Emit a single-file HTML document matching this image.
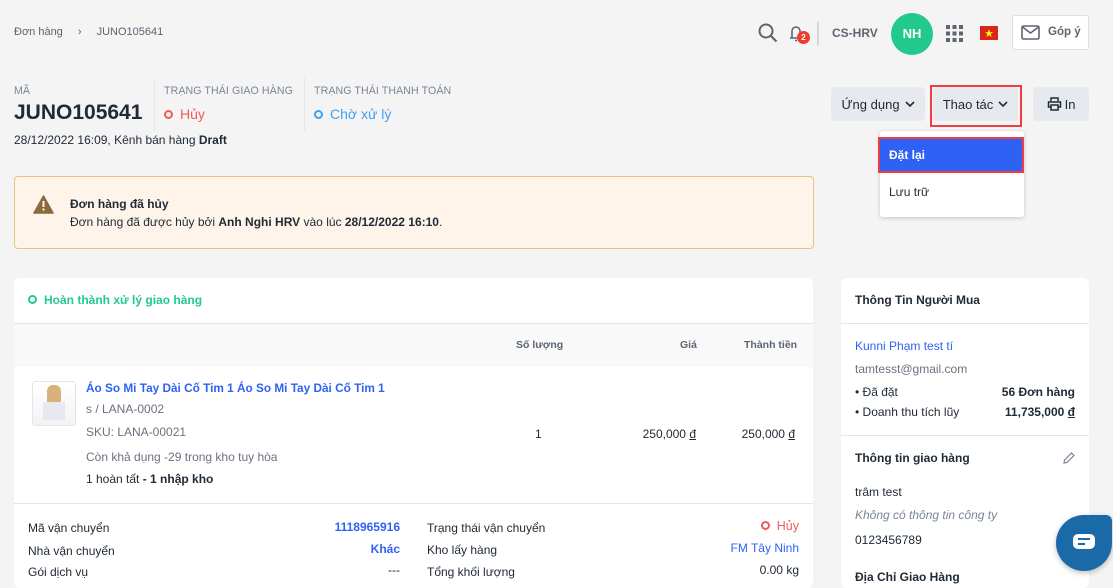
<!DOCTYPE html>
<html><head><meta charset="utf-8"><style>
*{box-sizing:border-box;margin:0;padding:0}
body{width:1113px;height:576px;overflow:hidden;background:#f4f4f4;font-family:"Liberation Sans","Noto Sans CJK SC",sans-serif;color:#212b36;position:relative;font-size:12px}
.a{position:absolute;white-space:nowrap}
.b{font-weight:bold}
.card{position:absolute;background:#fff;border-radius:6px;overflow:hidden}
.lbl{color:#7a8595;font-size:10.6px;letter-spacing:.1px}
.btn{position:absolute;background:#e6e9ed;border-radius:4px;height:34px;font-size:13px;display:flex;align-items:center;justify-content:center}
.ring{display:inline-block;width:9px;height:9px;border:2px solid;border-radius:50%;margin-right:7px;vertical-align:0px}
</style></head><body>
<div class="a" style="left:14px;top:26px;font-size:11px;color:#5a6472">Đơn hàng <span style="margin:0 12px">›</span> JUNO105641</div>
<svg class="a" style="left:757px;top:22px" width="22" height="22" viewBox="0 0 22 22"><circle cx="9" cy="9" r="6.5" fill="none" stroke="#5e6470" stroke-width="2"/><path d="M14 14l5.5 5.5" stroke="#5e6470" stroke-width="2.2"/></svg>
<svg class="a" style="left:787px;top:22px" width="20" height="22" viewBox="0 0 20 22"><path d="M3 16h12M5 16V9a4 4 0 018 0v7M8 18.5h2" fill="none" stroke="#5e6470" stroke-width="1.6"/></svg>
<div class="a" style="left:797px;top:31px;width:13px;height:13px;border-radius:50%;background:#f03c2e;color:#fff;font-size:8px;font-weight:bold;text-align:center;line-height:13px">2</div>
<div class="a" style="left:817px;top:22px;width:2px;height:24px;background:#d6d8dc"></div>
<div class="a b" style="left:832px;top:26px;color:#5e6470;font-size:12px">CS-HRV</div>
<div class="a b" style="left:891px;top:13px;width:42px;height:42px;border-radius:50%;background:#22c98d;color:#fff;font-size:13px;text-align:center;line-height:42px">NH</div>
<svg class="a" style="left:946px;top:25px" width="17" height="17" viewBox="0 0 17 17" fill="#5e6470"><rect x="0" y="0" width="4" height="4"/><rect x="6.5" y="0" width="4" height="4"/><rect x="13" y="0" width="4" height="4"/><rect x="0" y="6.5" width="4" height="4"/><rect x="6.5" y="6.5" width="4" height="4"/><rect x="13" y="6.5" width="4" height="4"/><rect x="0" y="13" width="4" height="4"/><rect x="6.5" y="13" width="4" height="4"/><rect x="13" y="13" width="4" height="4"/></svg>
<svg class="a" style="left:980px;top:26px" width="18" height="14" viewBox="0 0 18 14"><rect width="18" height="14" fill="#da251d"/><polygon points="9,3 10,6.2 13.2,6.2 10.6,8 11.6,11 9,9.2 6.4,11 7.4,8 4.8,6.2 8,6.2" fill="#ff0"/></svg>
<div class="a" style="left:1012px;top:15px;width:77px;height:35px;background:#fff;border:1px solid #dcdfe3;border-radius:3px"></div>
<svg class="a" style="left:1021px;top:25px" width="19" height="15" viewBox="0 0 19 15"><rect x="1" y="1" width="17" height="13" rx="1.5" fill="none" stroke="#5e6470" stroke-width="1.6"/><path d="M1.5 2l8 6 8-6" fill="none" stroke="#5e6470" stroke-width="1.6"/></svg>
<div class="a b" style="left:1048px;top:26px;color:#5e6470;font-size:11.5px">Góp ý</div>
<div class="a lbl" style="left:14px;top:85px">MÃ</div>
<div class="a b" style="left:14px;top:101px;font-size:21px;color:#212b36">JUNO105641</div>
<div class="a" style="left:14px;top:133px;font-size:12px">28/12/2022 16:09, Kênh bán hàng <b>Draft</b></div>
<div class="a" style="left:154px;top:78px;width:1px;height:53px;background:#e3e5e8"></div>
<div class="a lbl" style="left:164px;top:85px">TRẠNG THÁI GIAO HÀNG</div>
<div class="a" style="left:164px;top:106px;font-size:14px;color:#f25a5a"><span class="ring" style="border-color:#f25a5a"></span>Hủy</div>
<div class="a" style="left:304px;top:78px;width:1px;height:53px;background:#e3e5e8"></div>
<div class="a lbl" style="left:314px;top:85px">TRẠNG THÁI THANH TOÁN</div>
<div class="a" style="left:314px;top:106px;font-size:14px;color:#3ea0f5"><span class="ring" style="border-color:#3ea0f5"></span>Chờ xử lý</div>
<div class="btn" style="left:831px;top:87px;width:94px">Ứng dụng <svg width="10" height="7" style="margin-left:5px" viewBox="0 0 10 7"><path d="M1 1l4 4 4-4" fill="none" stroke="#212b36" stroke-width="1.6"/></svg></div>
<div class="btn" style="left:933px;top:87px;width:85px">Thao tác <svg width="10" height="7" style="margin-left:5px" viewBox="0 0 10 7"><path d="M1 1l4 4 4-4" fill="none" stroke="#212b36" stroke-width="1.6"/></svg></div>
<div class="a" style="left:930px;top:85px;width:92px;height:42px;border:2px solid #ee3d43"></div>
<div class="btn" style="left:1033px;top:87px;width:56px"><svg width="15" height="14" viewBox="0 0 15 14" style="margin-right:3px"><path d="M4 4V1h7v3M4 10H1.5V5h12v5H11" fill="none" stroke="#212b36" stroke-width="1.5"/><rect x="4" y="8" width="7" height="5" fill="none" stroke="#212b36" stroke-width="1.5"/></svg>In</div>
<div class="a" style="left:880px;top:131px;width:144px;height:86px;background:#fff;border-radius:3px;box-shadow:0 1px 4px rgba(0,0,0,.2)"></div>
<div class="a" style="left:880px;top:137px;width:143px;height:36px;background:#2e62f5"></div>
<div class="a" style="left:878px;top:137px;width:146px;height:36px;border:2px solid #ee3d43"></div>
<div class="a b" style="left:889px;top:148px;color:#fff;font-size:12px">Đặt lại</div>
<div class="a" style="left:889px;top:185px;font-size:12px">Lưu trữ</div>
<div class="a" style="left:14px;top:176px;width:800px;height:73px;background:#fef4ea;border:1px solid #e7c482;border-radius:4px"></div>
<svg class="a" style="left:33px;top:195px" width="21" height="19" viewBox="0 0 21 19"><path d="M10.5 1L20 18H1z" fill="#8b6a3c" stroke="#8b6a3c" stroke-linejoin="round" stroke-width="1.5"/><rect x="9.5" y="6" width="2" height="6" fill="#fef4ea"/><rect x="9.5" y="13.5" width="2" height="2" fill="#fef4ea"/></svg>
<div class="a b" style="left:70px;top:197px;font-size:12px">Đơn hàng đã hủy</div>
<div class="a" style="left:70px;top:215px;font-size:12px">Đơn hàng đã được hủy bởi <b>Anh Nghi HRV</b> vào lúc <b>28/12/2022 16:10</b>.</div>
<div class="card" style="left:14px;top:278px;width:799px;height:310px">
 <div class="a b" style="left:14px;top:15px;color:#22c98d;font-size:12px"><span class="ring" style="border-color:#22c98d"></span>Hoàn thành xử lý giao hàng</div>
 <div class="a" style="left:0;top:45px;width:799px;height:1px;background:#e3e5e8"></div>
 <div class="a" style="left:0;top:46px;width:799px;height:43px;background:#f9f9f9"></div>
 <div class="a b" style="left:502px;top:61px;font-size:10.5px;color:#5a6472">Số lượng</div>
 <div class="a b" style="left:666px;top:61px;font-size:10.5px;color:#5a6472">Giá</div>
 <div class="a b" style="left:730px;top:61px;font-size:10.5px;color:#5a6472">Thành tiền</div>
 <div class="a" style="left:18px;top:103px;width:44px;height:45px;border:1px solid #e3e5e8;border-radius:3px;background:linear-gradient(#fff,#f3f3f6)"><div style="margin:3px auto;width:14px;height:18px;background:#d9b27a;border-radius:6px 6px 2px 2px"></div><div style="margin:-4px auto 0;width:22px;height:18px;background:#e8e8ee"></div></div>
 <div class="a b" style="left:72px;top:103px;color:#2e62f5;font-size:11.8px">Áo So Mi Tay Dài Cố Tim 1 Áo So Mi Tay Dài Cố Tim 1</div>
 <div class="a" style="left:72px;top:124px;color:#6b7280;font-size:12px">s / LANA-0002</div>
 <div class="a" style="left:72px;top:147px;color:#6b7280;font-size:12px">SKU: LANA-00021</div>
 <div class="a" style="left:72px;top:172px;color:#6b7280;font-size:12px">Còn khả dụng -29 trong kho tuy hòa</div>
 <div class="a" style="left:72px;top:194px;font-size:12px">1 hoàn tất <b>- 1 nhập kho</b></div>
 <div class="a" style="left:521px;top:149px;font-size:12px">1</div>
 <div class="a" style="right:117px;top:149px;font-size:12px">250,000 <u>đ</u></div>
 <div class="a" style="right:18px;top:149px;font-size:12px">250,000 <u>đ</u></div>
 <div class="a" style="left:0;top:225px;width:799px;height:1px;background:#e3e5e8"></div>
 <div class="a" style="left:14px;top:243px;font-size:12px">Mã vận chuyển</div>
 <div class="a b" style="right:413px;top:242px;font-size:12px;color:#2e62f5">1118965916</div>
 <div class="a" style="left:14px;top:266px;font-size:12px">Nhà vận chuyển</div>
 <div class="a b" style="right:413px;top:264px;font-size:12px;color:#2e62f5">Khác</div>
 <div class="a" style="left:14px;top:287px;font-size:12px">Gói dịch vụ</div>
 <div class="a" style="right:413px;top:285px;font-size:12px">---</div>
 <div class="a" style="left:413px;top:243px;font-size:12px">Trạng thái vận chuyển</div>
 <div class="a" style="right:14px;top:241px;font-size:12.5px;color:#f25a5a"><span class="ring" style="border-color:#f25a5a"></span>Hủy</div>
 <div class="a" style="left:413px;top:265px;font-size:12px">Kho lấy hàng</div>
 <div class="a" style="right:14px;top:263px;font-size:12px;color:#2e62f5">FM Tây Ninh</div>
 <div class="a" style="left:413px;top:287px;font-size:12px">Tổng khối lượng</div>
 <div class="a" style="right:14px;top:285px;font-size:12px">0.00 kg</div>
</div>
<div class="card" style="left:841px;top:278px;width:248px;height:310px">
 <div class="a b" style="left:14px;top:15px;font-size:12px">Thông Tin Người Mua</div>
 <div class="a" style="left:0;top:45px;width:248px;height:1px;background:#e3e5e8"></div>
 <div class="a" style="left:14px;top:61px;font-size:12px;color:#2e62f5">Kunni Phạm test tí</div>
 <div class="a" style="left:14px;top:84px;font-size:12px;color:#6b7280">tamtesst@gmail.com</div>
 <div class="a" style="left:14px;top:107px;font-size:12px">• Đã đặt</div>
 <div class="a b" style="right:14px;top:107px;font-size:12px">56 Đơn hàng</div>
 <div class="a" style="left:14px;top:127px;font-size:12px">• Doanh thu tích lũy</div>
 <div class="a b" style="right:14px;top:127px;font-size:12px">11,735,000 <u>đ</u></div>
 <div class="a" style="left:0;top:157px;width:248px;height:1px;background:#e3e5e8"></div>
 <div class="a b" style="left:14px;top:173px;font-size:12px">Thông tin giao hàng</div>
 <svg class="a" style="left:222px;top:174px" width="12" height="12" viewBox="0 0 12 12"><path d="M1 11l.5-3L8.5 1l2.5 2.5-7 7z" fill="none" stroke="#7a8595" stroke-width="1.2"/></svg>
 <div class="a" style="left:14px;top:207px;font-size:12px">trâm test</div>
 <div class="a" style="left:14px;top:230px;font-size:12px;color:#7a8595;font-style:italic">Không có thông tin công ty</div>
 <div class="a" style="left:14px;top:255px;font-size:12px">0123456789</div>
 <div class="a b" style="left:14px;top:292px;font-size:12px">Địa Chỉ Giao Hàng</div>
</div>
<div class="a" style="left:1056px;top:515px;width:56px;height:56px;background:#1b6aa8;border-radius:50% 6px 50% 50%;box-shadow:0 2px 6px rgba(0,0,0,.25)"></div>
<div class="a" style="left:1073px;top:534px;width:22px;height:15px;background:#fff;border-radius:5px"><div style="margin:4px 0 0 5px;width:12px;height:2px;background:#1b6aa8"></div><div style="margin:3px 0 0 5px;width:7px;height:2px;background:#1b6aa8"></div></div>
</body></html>
